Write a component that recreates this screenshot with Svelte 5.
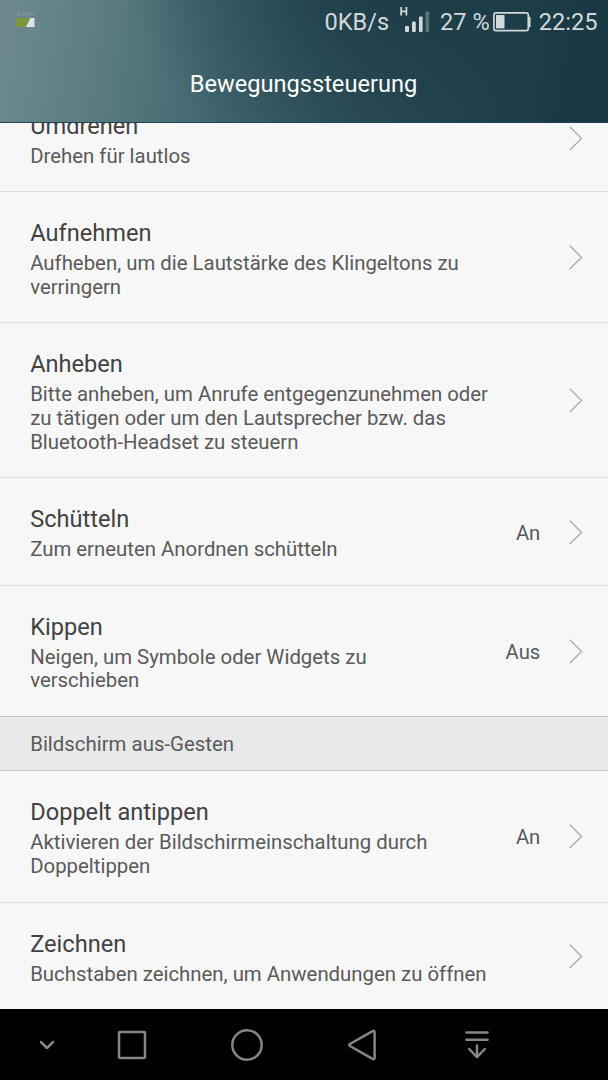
<script lang="ts">
  interface Setting {
    title: string;
    summary: string;
    status?: string;
  }
  interface Group {
    heading?: string;
    items: Setting[];
  }

  let groups: Group[] = [
    {
      items: [
        { title: 'Umdrehen', summary: 'Drehen für lautlos' },
        { title: 'Aufnehmen', summary: 'Aufheben, um die Lautstärke des Klingeltons zu verringern' },
        { title: 'Anheben', summary: 'Bitte anheben, um Anrufe entgegenzunehmen oder zu tätigen oder um den Lautsprecher bzw. das Bluetooth-Headset zu steuern' },
        { title: 'Schütteln', summary: 'Zum erneuten Anordnen schütteln', status: 'An' },
        { title: 'Kippen', summary: 'Neigen, um Symbole oder Widgets zu verschieben', status: 'Aus' }
      ]
    },
    {
      heading: 'Bildschirm aus-Gesten',
      items: [
        { title: 'Doppelt antippen', summary: 'Aktivieren der Bildschirmeinschaltung durch Doppeltippen', status: 'An' },
        { title: 'Zeichnen', summary: 'Buchstaben zeichnen, um Anwendungen zu öffnen' }
      ]
    }
  ];
</script>

<div class="screen">
  <header class="header">
    <div class="status-bar">
      <div class="data-icon">
        <span class="data-label">DATA</span>
        <svg width="19" height="9" viewBox="0 0 19 9">
          <path d="M0 0H14L9.5 9H0Z" fill="#7b983c" />
          <path d="M14.5 0H18.5V9H10Z" fill="#e2e5e5" />
        </svg>
      </div>
      <div class="status-right">
        <span class="speed">0KB/s</span>
        <svg class="signal" width="30" height="26" viewBox="0 0 30 26">
          <path d="M1.2 0V8.6M6.4 0V8.6M1.2 4.3H6.4" stroke="#d3d8da" stroke-width="1.8" fill="none" />
          <rect x="5" y="19" width="4" height="6" rx="1" fill="#d3d8da" />
          <rect x="12" y="14.5" width="3.8" height="10.5" rx="1" fill="#d3d8da" />
          <rect x="19" y="9.5" width="3.6" height="15.5" rx="1" fill="#d3d8da" />
          <rect x="25.5" y="4.5" width="3.7" height="20.5" rx="1" fill="#57767c" />
        </svg>
        <span class="percent">27 %</span>
        <svg class="battery" width="38" height="20" viewBox="0 0 38 20">
          <rect x="0.9" y="0.9" width="34.4" height="17.7" rx="2.2" fill="none" stroke="#d3d8da" stroke-width="1.7" />
          <rect x="3" y="3" width="8.5" height="13.4" fill="#d3d8da" />
          <path d="M35.5 5.5H36.8V14.2H35.5" fill="none" stroke="#d3d8da" stroke-width="1.5" />
        </svg>
        <span>22:25</span>
      </div>
    </div>
    <h1 class="header-title">Bewegungssteuerung</h1>
  </header>

  <main class="content">
    <div class="list">
      {#each groups as group}
        {#if group.heading}
          <h2 class="heading">{group.heading}</h2>
        {/if}
        {#each group.items as item}
          <button type="button" class="row">
            <span class="row-text">
              <span class="row-title">{item.title}</span>
              <span class="row-summary">{item.summary}</span>
            </span>
            {#if item.status}
              <span class="row-status">{item.status}</span>
            {/if}
            <svg class="chevron" width="14" height="25" viewBox="0 0 14 25">
              <path d="M0.8 0.8L12.5 12.4L0.8 24" fill="none" stroke="#a8a8a8" stroke-width="1.3" />
            </svg>
          </button>
        {/each}
      {/each}
    </div>
  </main>

  <nav class="nav-bar">
    <button type="button" class="nav-small" aria-label="Navigationsleiste ausblenden">
      <svg width="16" height="10" viewBox="0 0 16 10">
        <path d="M2 2L8 8L14 2" />
      </svg>
    </button>
    <button type="button" aria-label="Letzte Apps">
      <svg width="30" height="30" viewBox="0 0 30 30">
        <rect x="2" y="2" width="26" height="26" rx="1" />
      </svg>
    </button>
    <button type="button" aria-label="Startseite">
      <svg width="32" height="32" viewBox="0 0 32 32">
        <circle cx="16" cy="16" r="14.7" />
      </svg>
    </button>
    <button type="button" aria-label="Zurück">
      <svg width="30" height="32" viewBox="0 0 30 32">
        <path d="M2.9 15L25.6 2.1Q27.6 1.3 27.6 3.3V28.7Q27.6 30.7 25.6 29.9L2.9 17Q1.3 16 2.9 15Z" />
      </svg>
    </button>
    <button type="button" aria-label="Benachrichtigungen">
      <svg width="24" height="28" viewBox="0 0 24 28">
        <path d="M1.5 1.6H22.5M1.5 8.8H22.5M12 14.5V26M4.2 18L12 26.2L19.8 18" />
      </svg>
    </button>
    <span class="nav-small"></span>
  </nav>
</div>

<style>
:global(body) {
  margin: 0;
  background: #000;
}
.screen {
  width: 608px;
  height: 1080px;
  display: flex;
  flex-direction: column;
  overflow: hidden;
  font-family: Roboto, sans-serif;
}
button {
  border: none;
  background: none;
  padding: 0;
  font: inherit;
  cursor: pointer;
}
.header {
  height: 123px;
  flex-shrink: 0;
  box-sizing: border-box;
  border-bottom: 1px solid #1f4651;
  background:
    radial-gradient(ellipse 290px 260px at 410px -60px, rgba(26, 58, 70, 0.8) 30%, rgba(26, 58, 70, 0) 100%),
    linear-gradient(99deg, #6f898f 0%, #658489 8%, #5c7d82 16%, #51757b 24%, #486d74 31%, #41666e 38%, #395d65 48%, #30525c 60%, #23454f 78%, #1a3945 92%, #193844 100%);
}
.status-bar {
  height: 44px;
  display: flex;
  justify-content: space-between;
  align-items: center;
  padding: 0 10.5px 0 16px;
}
.data-icon {
  display: flex;
  flex-direction: column;
  margin-top: -7px;
}
.data-label {
  font-size: 6px;
  line-height: 8px;
  letter-spacing: 0.5px;
  padding-left: 1px;
  color: #9a9fa0;
}
.status-right {
  display: flex;
  align-items: center;
  font-size: 23.6px;
  color: #d3d8da;
}
.signal {
  margin: -5px 10px 0 11px;
}
.battery {
  margin: 0 8px 0 3px;
}
.header-title {
  margin: 0;
  padding: 26px 1px 0 0;
  text-align: center;
  font-size: 23.6px;
  font-weight: 400;
  line-height: 28px;
  color: #fff;
}
.content {
  flex: 1;
  min-height: 0;
  overflow: hidden;
  background: #f7f7f7;
}
.list {
  margin-top: -38.3px;
}
.row {
  width: 100%;
  display: flex;
  align-items: center;
  box-sizing: border-box;
  padding: 27px 25px 23px 30.2px;
  border-bottom: 1px solid #dedede;
  text-align: left;
}
.row-text {
  flex: 1;
  display: flex;
  flex-direction: column;
  gap: 5px;
  padding-right: 45px;
}
.row-title {
  font-size: 23.6px;
  line-height: 28px;
  color: #424242;
}
.row-summary {
  max-width: 470px;
  font-size: 20.37px;
  line-height: 23.6px;
  color: #5a5a5a;
}
.row-status {
  margin: 0 28.7px 2px 0;
  font-size: 20.3px;
  color: #5a5a5a;
}
.chevron {
  flex-shrink: 0;
  margin-bottom: 3px;
}
.heading {
  margin: -1px 0 0;
  height: 55.3px;
  box-sizing: border-box;
  display: flex;
  align-items: center;
  padding: 1px 0 0 30.2px;
  border-top: 1px solid #c6c6c6;
  border-bottom: 1px solid #c6c6c6;
  background: #e9e9e9;
  font-size: 20.4px;
  font-weight: 400;
  color: #5a5a5a;
}
.nav-bar {
  height: 71px;
  flex-shrink: 0;
  box-sizing: border-box;
  padding: 1px 0 0 20.4px;
  display: flex;
  background: #000;
}
.nav-bar button {
  width: 114.9px;
  display: flex;
  align-items: center;
  justify-content: center;
}
.nav-bar .nav-small {
  width: 54px;
}
.nav-bar svg {
  fill: none;
  stroke: #868686;
  stroke-width: 2.5;
  stroke-linecap: round;
  stroke-linejoin: round;
}
</style>
